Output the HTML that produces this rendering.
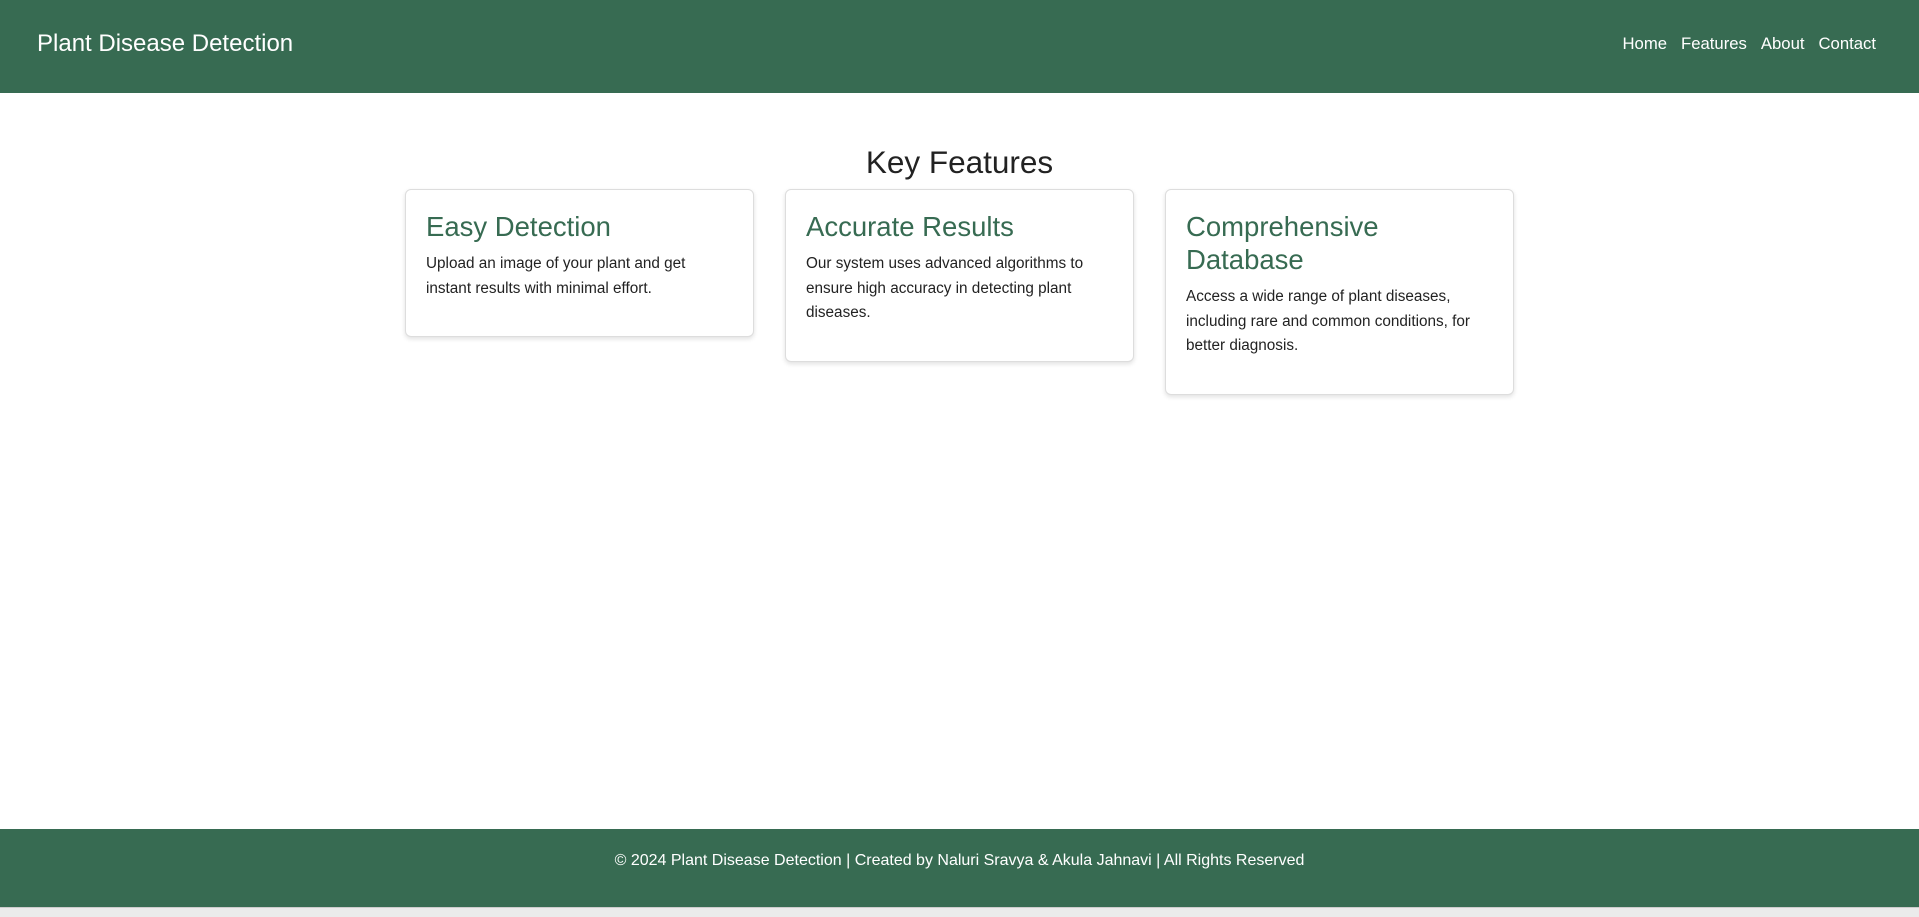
<!DOCTYPE html>
<html><head><meta charset="utf-8"><style>
*{box-sizing:border-box;margin:0;padding:0}
html,body{width:1919px;height:917px;overflow:hidden;background:#fff;font-family:"Liberation Sans",Arial,sans-serif;color:#222}
header{position:absolute;left:0;top:0;width:1919px;height:93px;background:#376b52;color:#fff}
header .logo{position:absolute;left:37px;top:29px;font-size:24px;line-height:30px}
header nav{position:absolute;right:43px;top:34px;font-size:16.7px;line-height:20px}
header nav span{margin-left:14px}
h2{position:absolute;left:0;width:1919px;top:142px;text-align:center;font-weight:normal;font-size:31.5px;line-height:40px;color:#222}
.card{position:absolute;top:189px;width:349px;background:#fff;border:1px solid #ddd;border-radius:6px;box-shadow:0 2px 5px rgba(0,0,0,.12);padding:20px 20px 35px 20px}
.card h3{font-weight:normal;font-size:27.5px;line-height:33px;color:#376b52;margin-bottom:9px}
.card p{font-size:15.3px;line-height:24.5px;color:#222}
footer{position:absolute;left:0;top:829px;width:1919px;height:78px;background:#376b52;color:#fff;text-align:center;font-size:16px;line-height:20px;padding-top:22px}
.bar{position:absolute;left:0;top:907px;width:1919px;height:10px;background:#ebebeb;border-top:1px solid #ccc}
</style></head><body>
<header><div class="logo">Plant Disease Detection</div>
<nav><span>Home</span><span>Features</span><span>About</span><span>Contact</span></nav></header>
<h2>Key Features</h2>
<div class="card" style="left:405px"><h3>Easy Detection</h3><p>Upload an image of your plant and get instant results with minimal effort.</p></div>
<div class="card" style="left:785px"><h3>Accurate Results</h3><p>Our system uses advanced algorithms to ensure high accuracy in detecting plant diseases.</p></div>
<div class="card" style="left:1165px"><h3>Comprehensive Database</h3><p>Access a wide range of plant diseases, including rare and common conditions, for better diagnosis.</p></div>
<footer>© 2024 Plant Disease Detection | Created by Naluri Sravya &amp; Akula Jahnavi | All Rights Reserved</footer>
<div class="bar"></div>
</body></html>
